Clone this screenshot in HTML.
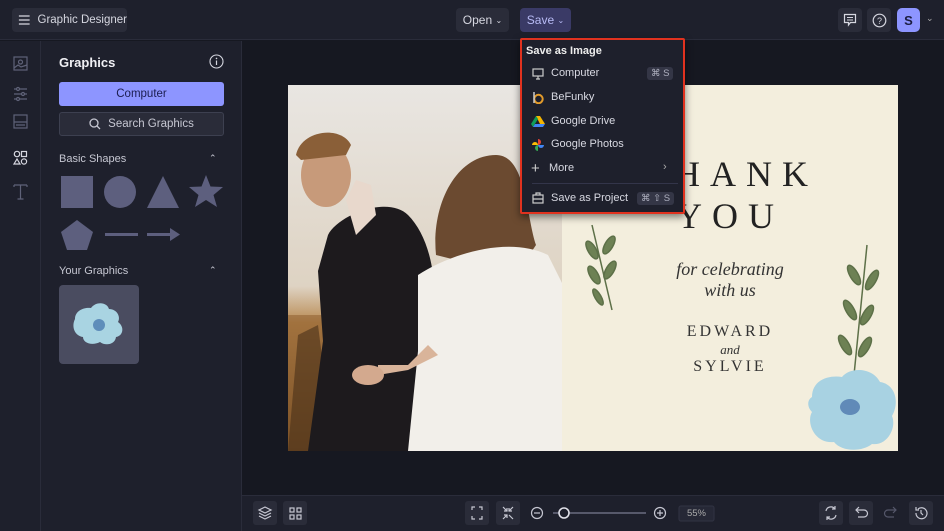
<!DOCTYPE html>
<html><head><style>
*{margin:0;padding:0;box-sizing:border-box}
body{width:944px;height:531px;overflow:hidden;background:#161821;font-family:"Liberation Sans",sans-serif;position:relative;color:#e4e5ec}
.abs{position:absolute}
.top{left:0;top:0;width:944px;height:40px;background:#1e202c;border-bottom:1px solid #2a2c3a}
.btn{position:absolute;background:#2a2c39;border-radius:4px;font-size:12px;color:#d6d7e0;display:flex;align-items:center;justify-content:center;white-space:nowrap}
.rail{left:0;top:41px;width:41px;height:490px;background:#1e202c;border-right:1px solid #2a2c3a}
.panel{left:41px;top:41px;width:201px;height:490px;background:#1e202c;border-right:1px solid #2a2c3a}
.bottom{left:242px;top:495px;width:702px;height:36px;background:#1e202c;border-top:1px solid #2a2c3a}
.shape{fill:#5d5f7e}
.menu{left:520px;top:38px;width:165px;height:176px;background:#1e202c;border:2px solid #e0321f;border-radius:2px;box-shadow:0 3px 8px rgba(0,0,0,.5)}
.mi{position:absolute;left:29px;font-size:11px;color:#d8d9e2;white-space:nowrap}
.kbd{position:absolute;background:#343646;color:#aeb0bf;font-size:9.5px;border-radius:3px;padding:1px 4px;white-space:nowrap}
.serif{font-family:"Liberation Serif",serif;color:#222}
</style></head><body>
<div class="abs top"></div>
<div class="btn" style="left:12px;top:8px;width:115px;height:24px;justify-content:flex-start;padding-left:6px;font-size:11.5px">
<svg width="14" height="12" viewBox="0 0 14 12"><path d="M1 1.5h12M1 6h12M1 10.5h12" stroke="#d6d7e0" stroke-width="1.4"/></svg><span style="margin-left:7px">Graphic Designer</span></div>
<div class="btn" style="left:456px;top:8px;width:53px;height:24px">Open&nbsp;<span style="font-size:8px">&#8964;</span></div>
<div class="btn" style="left:520px;top:8px;width:51px;height:24px;background:#3a3a66;color:#b8bbf5">Save&nbsp;<span style="font-size:8px">&#8964;</span></div>
<div class="btn" style="left:838px;top:8px;width:24px;height:24px"><svg width="14" height="14" viewBox="0 0 14 14"><path d="M1.5 1.5h11v8h-5l-2 2.5v-2.5h-4z" fill="none" stroke="#d6d7e0" stroke-width="1.2"/><path d="M4 4.5h6M4 7h6" stroke="#d6d7e0"/></svg></div>
<div class="btn" style="left:867px;top:8px;width:24px;height:24px"><svg width="15" height="15" viewBox="0 0 15 15"><circle cx="7.5" cy="7.5" r="6.3" fill="none" stroke="#d6d7e0" stroke-width="1.2"/><text x="7.5" y="11" font-size="9" text-anchor="middle" fill="#d6d7e0" font-family="Liberation Sans">?</text></svg></div>
<div class="btn" style="left:897px;top:8px;width:23px;height:24px;background:#8d95ff;color:#1b1d40;font-weight:bold;font-size:13px;border-radius:5px">S</div>
<div class="abs" style="left:926px;top:13px;font-size:9px;color:#aaa">&#8964;</div>

<div class="abs rail">
<svg width="41" height="170" viewBox="0 0 41 170" style="position:absolute;top:12px;left:0" fill="none" stroke="#5f6278" stroke-width="1.2">
<rect x="14" y="4" width="13" height="13"/><circle cx="20.5" cy="9" r="2"/><path d="M14 15l4-3 3 2 6-2"/>
<path d="M14 36h13M14 41h13M14 46h13"/><circle cx="18" cy="36" r="1.5" fill="#1e202c"/><circle cx="23" cy="41" r="1.5" fill="#1e202c"/><circle cx="18" cy="46" r="1.5" fill="#1e202c"/>
<rect x="14" y="62" width="13" height="13"/><path d="M14 69h13M16 72h9"/>
<g stroke="#d6d7e0"><circle cx="17" cy="101" r="2.7"/><rect x="21.5" y="98.5" width="5" height="5"/><path d="M17 106l-3 5h6z"/><circle cx="24" cy="108.5" r="2.6"/></g>
<path d="M14 132h13M20.5 132v14M17.5 146h6M14 132v2M27 132v2"/>
</svg>
</div>
<div class="abs panel">
<div class="abs" style="left:18px;top:14px;font-size:13px;font-weight:bold;color:#f0f0f4">Graphics</div>
<svg class="abs" style="left:168px;top:13px" width="15" height="15" viewBox="0 0 15 15"><circle cx="7.5" cy="7.5" r="6.5" fill="none" stroke="#d6d7e0" stroke-width="1.1"/><path d="M7.5 6.5v4.5" stroke="#d6d7e0" stroke-width="1.2"/><circle cx="7.5" cy="4.4" r=".8" fill="#d6d7e0"/></svg>
<div class="abs" style="left:18px;top:41px;width:165px;height:24px;background:#8d95ff;border-radius:3px;color:#1b1d50;font-size:11.5px;display:flex;align-items:center;justify-content:center">Computer</div>
<div class="abs" style="left:18px;top:71px;width:165px;height:24px;background:#2a2c39;border:1px solid #3d4050;border-radius:3px;color:#c6c7d2;font-size:11.5px;display:flex;align-items:center;justify-content:center"><svg width="12" height="12" viewBox="0 0 12 12" style="margin-right:7px"><circle cx="5" cy="5" r="4" fill="none" stroke="#c6c7d2" stroke-width="1.3"/><path d="M8 8l3 3" stroke="#c6c7d2" stroke-width="1.3"/></svg>Search Graphics</div>
<div class="abs" style="left:18px;top:112px;font-size:11px;color:#c6c7d2">Basic Shapes</div>
<div class="abs" style="left:168px;top:112px;font-size:9px;color:#c6c7d2">&#8963;</div>
<svg class="abs" style="left:18px;top:133px" width="170" height="40" viewBox="0 0 170 40">
<rect class="shape" x="2" y="2" width="32" height="32"/><circle class="shape" cx="61" cy="18" r="16"/><polygon class="shape" points="104,2 120,34 88,34"/>
<polygon class="shape" points="147,1 151.5,12.5 164,13 154.5,21 158,33 147,26 136,33 139.5,21 130,13 142.5,12.5"/>
</svg>
<svg class="abs" style="left:18px;top:178px" width="170" height="32" viewBox="0 0 170 32">
<polygon class="shape" points="18,1 34,13 28,31 8,31 2,13"/>
<rect class="shape" x="46" y="14" width="33" height="3"/>
<rect class="shape" x="88" y="14" width="25" height="3"/><polygon class="shape" points="111,9 121,15.5 111,22"/>
</svg>
<div class="abs" style="left:18px;top:224px;font-size:11px;color:#c6c7d2">Your Graphics</div>
<div class="abs" style="left:168px;top:224px;font-size:9px;color:#c6c7d2">&#8963;</div>
<div class="abs" style="left:18px;top:244px;width:80px;height:79px;background:#4a4c60;border-radius:4px">
<svg width="80" height="79" viewBox="0 0 80 79"><path d="M16 34c0-9 10-12 16-11 5-7 16-6 18 1 8 0 12 8 9 13 7 5 5 14-2 15-1 8-11 9-16 5-8 4-17 1-17-5-8-1-12-10-8-18z" fill="#a9d4e2"/><circle cx="40" cy="40" r="6" fill="#4b7bb0" opacity=".8"/></svg></div>
</div>

<!-- canvas -->
<svg class="abs" style="left:288px;top:85px" width="275" height="366" viewBox="0 0 275 366">
<defs>
<linearGradient id="sky" x1="0" y1="0" x2="0" y2="1"><stop offset="0" stop-color="#e9e6e2"/><stop offset=".55" stop-color="#ded3c3"/><stop offset=".65" stop-color="#b98a52"/><stop offset="1" stop-color="#6e4a25"/></linearGradient>
</defs>
<rect width="275" height="366" fill="url(#sky)"/>
<rect y="230" width="275" height="136" fill="#8a5a2a" opacity=".5"/>
<path d="M10 250l20-10 10 80 20 46H0z" fill="#4a3019" opacity=".6"/>
<path d="M40 150c10-20 60-40 80-20 20 20 30 60 25 100l-5 30 5 106H20l15-110-5-70z" fill="#1d1a1d"/>
<path d="M58 115l10-20 15 5 5 30-20 20z" fill="#e8d8cc"/>
<ellipse cx="38" cy="90" rx="25" ry="32" fill="#c79a7a"/>
<path d="M8 70c5-25 45-30 55-10l-5 10-45 5z" fill="#8a5f38"/>
<path d="M148 170c-5-50 20-100 60-100 30 0 30 60 40 90l-20 30z" fill="#6b4a30"/>
<path d="M130 190c30-20 90-40 130-20l15 30v166H120l10-100z" fill="#f2efea"/>
<path d="M140 260l-20 20-30 0v10l30-5 30-15z" fill="#d9b49a"/>
<ellipse cx="80" cy="290" rx="16" ry="10" fill="#d3a98e"/>
</svg>
<div class="abs" style="left:562px;top:85px;width:336px;height:366px;background:#f3eedd"></div>
<svg class="abs" style="left:562px;top:85px" width="336" height="366" viewBox="0 0 336 366">
<g stroke="#5d7048" stroke-width="1.5" fill="#6d8154">
<path d="M30 140l20 85" fill="none"/>
<ellipse cx="30" cy="165" rx="4" ry="10" transform="rotate(-30 30 165)"/><ellipse cx="47" cy="160" rx="4" ry="10" transform="rotate(30 47 160)"/>
<ellipse cx="32" cy="190" rx="4" ry="10" transform="rotate(-30 32 190)"/><ellipse cx="48" cy="185" rx="4" ry="10" transform="rotate(30 48 185)"/>
<ellipse cx="36" cy="212" rx="3" ry="9" transform="rotate(-30 36 212)"/>
<path d="M305 160l-15 150" fill="none"/>
<ellipse cx="292" cy="190" rx="4" ry="11" transform="rotate(-30 292 190)"/><ellipse cx="310" cy="195" rx="4" ry="11" transform="rotate(30 310 195)"/>
<ellipse cx="288" cy="225" rx="4" ry="11" transform="rotate(-30 288 225)"/><ellipse cx="305" cy="230" rx="4" ry="11" transform="rotate(30 305 230)"/>
<ellipse cx="283" cy="260" rx="4" ry="11" transform="rotate(-30 283 260)"/><ellipse cx="303" cy="262" rx="4" ry="11" transform="rotate(30 303 262)"/>
</g>
<path d="M250 312c0-18 18-22 30-20 8-10 30-10 38 5 15 2 20 20 12 34 5 12-5 30-20 28-10 8-30 8-38-2-20 2-28-20-22-30-5-5-5-12 0-15z" fill="#a8d2e2"/>
<ellipse cx="288" cy="322" rx="10" ry="8" fill="#4e78ae" opacity=".8"/>
</svg>
<div class="abs serif" style="left:562px;top:153px;width:336px;text-align:center;font-size:36px;letter-spacing:10px">THANK</div>
<div class="abs serif" style="left:562px;top:195px;width:336px;text-align:center;font-size:36px;letter-spacing:10px">YOU</div>
<div class="abs serif" style="left:562px;top:259px;width:336px;text-align:center;font-size:18px;font-style:italic;line-height:21px;color:#333">for celebrating<br>with us</div>
<div class="abs serif" style="left:562px;top:323px;width:336px;text-align:center;font-size:16px;letter-spacing:3px;color:#333">EDWARD</div>
<div class="abs serif" style="left:562px;top:342px;width:336px;text-align:center;font-size:13px;font-style:italic;color:#333">and</div>
<div class="abs serif" style="left:562px;top:358px;width:336px;text-align:center;font-size:16px;letter-spacing:3px;color:#333">SYLVIE</div>

<div class="abs menu">
<div class="abs" style="left:4px;top:5px;font-size:11px;font-weight:bold;color:#eee">Save as Image</div>
<svg class="abs" style="left:10px;top:28px" width="12" height="12" viewBox="0 0 12 12"><rect x="1" y="1" width="10" height="7" fill="none" stroke="#ccc" stroke-width="1.2"/><path d="M4 11h4M6 8v3" stroke="#ccc" stroke-width="1.2"/></svg>
<div class="mi" style="top:27px">Computer</div><div class="kbd" style="left:125px;top:27px">⌘ S</div>
<svg class="abs" style="left:10px;top:51px" width="12" height="13" viewBox="0 0 12 13"><circle cx="6.5" cy="8" r="4.2" fill="none" stroke="#e39b2b" stroke-width="2"/><path d="M2 1v11" stroke="#ccc" stroke-width="1.5"/></svg>
<div class="mi" style="top:51px">BeFunky</div>
<svg class="abs" style="left:9px;top:75px" width="14" height="12" viewBox="0 0 14 12"><path d="M5 1h4l5 8H9z" fill="#f4b400"/><path d="M5 1l-5 8 2 3 5-8z" fill="#0f9d58"/><path d="M2 12h10l2-3H4z" fill="#4285f4"/></svg>
<div class="mi" style="top:75px">Google Drive</div>
<svg class="abs" style="left:9px;top:98px" width="14" height="14" viewBox="0 0 14 14"><path d="M7 7V1a3 3 0 0 1 0 6z" fill="#ea4335"/><path d="M7 7h6a3 3 0 0 1-6 0z" fill="#4285f4"/><path d="M7 7v6a3 3 0 0 1 0-6z" fill="#34a853"/><path d="M7 7H1a3 3 0 0 1 6 0z" fill="#fbbc05"/></svg>
<div class="mi" style="top:98px">Google Photos</div>
<div class="abs" style="left:9px;top:120px;font-size:15px;color:#ccc">+</div>
<div class="mi" style="top:122px;left:27px">More</div><div class="abs" style="left:141px;top:121px;font-size:11px;color:#aaa">›</div>
<div class="abs" style="left:10px;top:143px;width:146px;height:1px;background:#33354a"></div>
<svg class="abs" style="left:10px;top:152px" width="12" height="12" viewBox="0 0 12 12"><rect x="1" y="3" width="10" height="8" fill="none" stroke="#ccc" stroke-width="1.2"/><path d="M4 3V1h4v2M1 7h10" stroke="#ccc" stroke-width="1.2" fill="none"/></svg>
<div class="mi" style="top:152px">Save as Project</div><div class="kbd" style="left:115px;top:152px">⌘ ⇧ S</div>
</div>

<div class="abs bottom"></div>
<svg class="abs" style="left:242px;top:495px" width="702" height="36" viewBox="0 0 702 36" fill="none" stroke="#c6c7d2" stroke-width="1.2">
<rect x="11" y="6" width="24" height="24" rx="3" fill="#2a2c39" stroke="none"/><rect x="41" y="6" width="24" height="24" rx="3" fill="#2a2c39" stroke="none"/>
<path d="M23 12l6 3-6 3-6-3zM17 18l6 3 6-3M17 21l6 3 6-3"/>
<rect x="48" y="13" width="4" height="4"/><rect x="55" y="13" width="4" height="4"/><rect x="48" y="20" width="4" height="4"/><rect x="55" y="20" width="4" height="4"/>
<rect x="223" y="6" width="24" height="24" rx="3" fill="#2a2c39" stroke="none"/><rect x="254" y="6" width="24" height="24" rx="3" fill="#2a2c39" stroke="none"/>
<path d="M230 15v-3h3M240 15v-3h-3M230 21v3h3M240 21v3h-3"/>
<path d="M261 12l4 4M265 13v3h-3M271 12l-4 4M267 13v3h3M261 24l4-4M265 23v-3h-3M271 24l-4-4"/>
<circle cx="295" cy="18" r="5.5"/><path d="M292 18h6"/>
<path d="M311 18h6M327 18h77" stroke="#6a6c80" stroke-width="1.5"/><circle cx="322" cy="18" r="5" fill="#1e202c" stroke="#e0e0e8" stroke-width="1.6"/>
<circle cx="418" cy="18" r="5.5"/><path d="M415 18h6M418 15v6"/>
<rect x="437" y="11" width="35" height="15" rx="2" fill="#262836" stroke="#2f3140"/>
<rect x="577" y="6" width="24" height="24" rx="3" fill="#2a2c39" stroke="none"/><rect x="607" y="6" width="24" height="24" rx="3" fill="#2a2c39" stroke="none"/><rect x="667" y="6" width="24" height="24" rx="3" fill="#2a2c39" stroke="none"/>
<path d="M584 16a5 5 0 0 1 9-2M594 20a5 5 0 0 1-9 2M593 11v3h-3M585 25v-3h3"/>
<path d="M614 15h8a3.5 3.5 0 0 1 0 7h-6M617 12l-3 3 3 3"/>
<path d="M654 15h-8a3.5 3.5 0 0 0 0 7h6M651 12l3 3-3 3" stroke="#55576a"/>
<path d="M674 18a5.5 5.5 0 1 0 2-4M674 12v3h3M679 15v3l2 2"/>
</svg>
<div class="abs" style="left:679px;top:508px;width:35px;text-align:center;font-size:9.5px;color:#aaa">55%</div>
</body></html>
